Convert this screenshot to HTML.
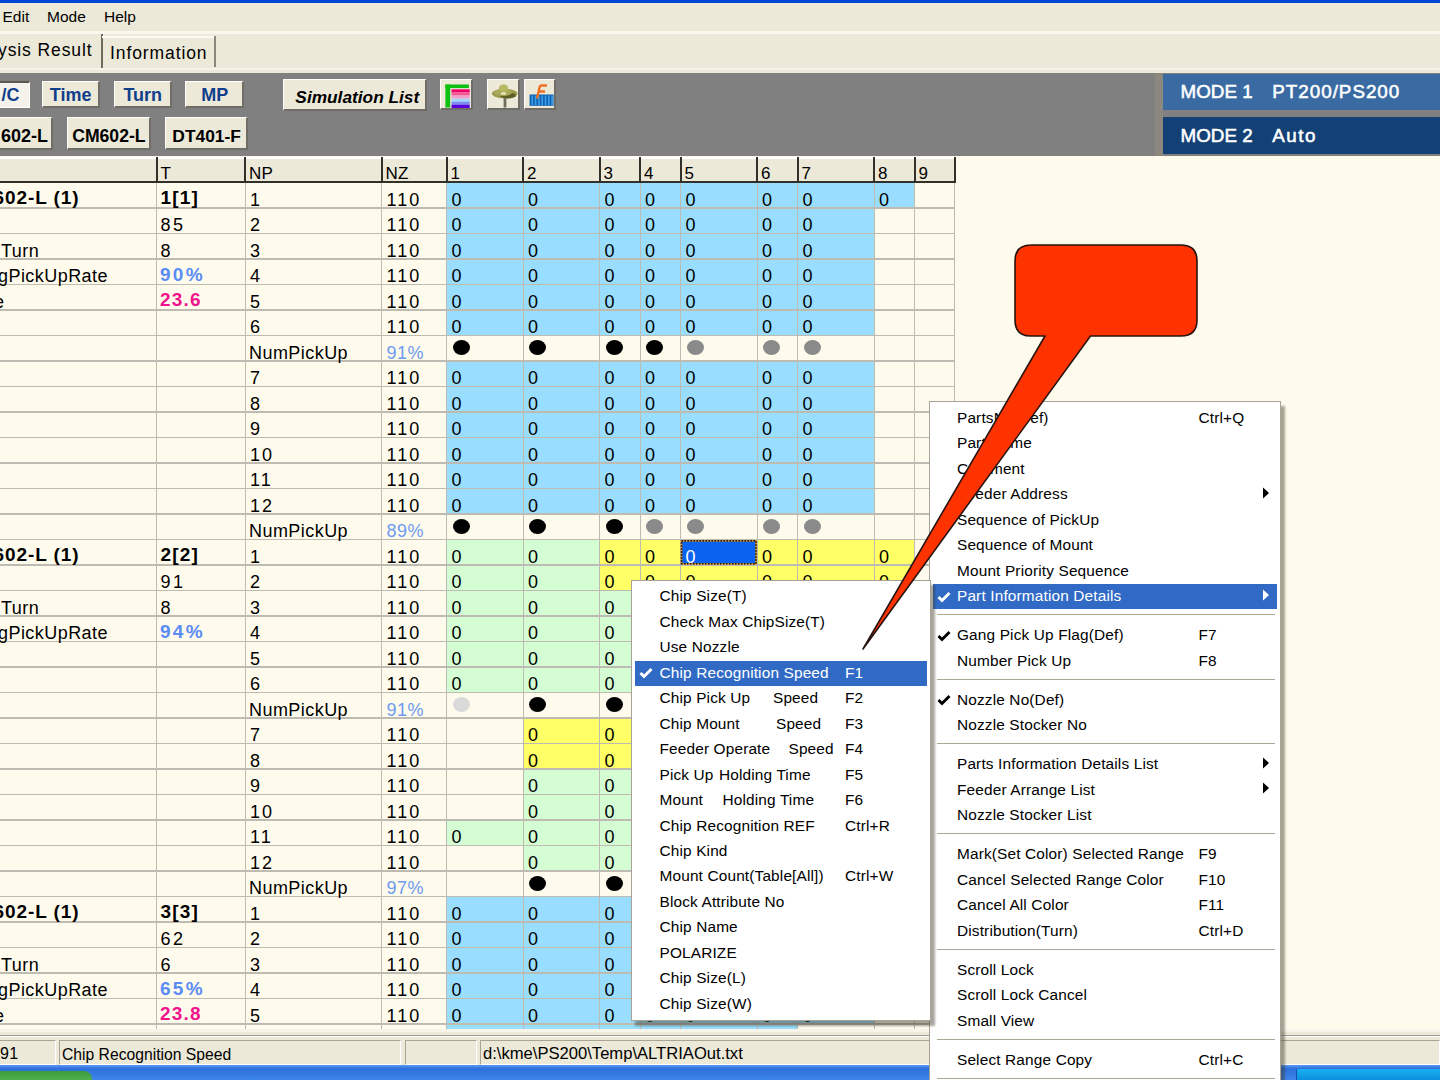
<!DOCTYPE html><html><head><meta charset="utf-8"><style>
html,body{margin:0;padding:0;width:1440px;height:1080px;overflow:hidden;background:#ECE9D8;}
body{position:relative;font-family:"Liberation Sans", sans-serif;}
div,span,svg{position:absolute;box-sizing:border-box;}
.t{white-space:pre;line-height:1;color:#000;}
</style></head><body>
<div style="left:0px;top:0px;width:1440px;height:3px;background:#0046D5"></div>
<span class="t" style="left:2.5px;top:8.87px;font-size:15.5px;letter-spacing:0px;">Edit</span>
<span class="t" style="left:47px;top:8.87px;font-size:15.5px;letter-spacing:0px;">Mode</span>
<span class="t" style="left:104px;top:8.87px;font-size:15.5px;letter-spacing:0px;">Help</span>
<div style="left:0px;top:31px;width:1440px;height:2.5px;background:#FAF8EE"></div>
<div style="left:101px;top:34px;width:2px;height:34px;background:#6E6B60"></div>
<div style="left:102px;top:36px;width:112px;height:1.5px;background:#FBFAF4"></div>
<div style="left:213.5px;top:36px;width:2px;height:31px;background:#8A877C"></div>
<span class="t" style="left:-2px;top:42.18px;font-size:17.5px;letter-spacing:0px;letter-spacing:0.9px">ysis Result</span>
<span class="t" style="left:110px;top:44.68px;font-size:17.5px;letter-spacing:0px;letter-spacing:0.9px">Information</span>
<div style="left:0px;top:68px;width:1440px;height:1.5px;background:#F6F4EA"></div>
<div style="left:0px;top:73px;width:1440px;height:82.5px;background:#808080"></div>
<div style="left:-40px;top:81px;width:69.5px;height:26.5px;background:#F4F2EA;border-top:2px solid #5A5850;border-left:2px solid #5A5850;border-right:1px solid #fff;border-bottom:1px solid #fff;"></div>
<div style="left:-40px;top:82.7px;width:69.5px;height:26.5px;display:flex;align-items:center;justify-content:center;font-weight:bold;font-size:18px;color:#103E8A;letter-spacing:0px;white-space:pre;justify-content:flex-end;padding-right:10px;">  /C</div>
<div style="left:41.7px;top:81px;width:58px;height:26.5px;background:#ECE9D8;border-top:1.5px solid #FFFFFF;border-left:1.5px solid #FFFFFF;border-right:2px solid #6F6D66;border-bottom:2px solid #6F6D66;"></div>
<div style="left:41.7px;top:82.7px;width:58px;height:26.5px;display:flex;align-items:center;justify-content:center;font-weight:bold;font-size:18px;color:#103E8A;letter-spacing:0px;white-space:pre;">Time</div>
<div style="left:113.7px;top:81px;width:58.2px;height:26.5px;background:#ECE9D8;border-top:1.5px solid #FFFFFF;border-left:1.5px solid #FFFFFF;border-right:2px solid #6F6D66;border-bottom:2px solid #6F6D66;"></div>
<div style="left:113.7px;top:82.7px;width:58.2px;height:26.5px;display:flex;align-items:center;justify-content:center;font-weight:bold;font-size:18px;color:#103E8A;letter-spacing:0px;white-space:pre;">Turn</div>
<div style="left:185.4px;top:81px;width:58.5px;height:26.5px;background:#ECE9D8;border-top:1.5px solid #FFFFFF;border-left:1.5px solid #FFFFFF;border-right:2px solid #6F6D66;border-bottom:2px solid #6F6D66;"></div>
<div style="left:185.4px;top:82.7px;width:58.5px;height:26.5px;display:flex;align-items:center;justify-content:center;font-weight:bold;font-size:18px;color:#103E8A;letter-spacing:0px;white-space:pre;">MP</div>
<div style="left:283.3px;top:79px;width:144px;height:31.5px;background:#ECE9D8;border-top:1.5px solid #FFFFFF;border-left:1.5px solid #FFFFFF;border-right:2px solid #6F6D66;border-bottom:2px solid #6F6D66;"></div>
<div style="left:283.3px;top:81.5px;width:144px;height:31.5px;display:flex;align-items:center;justify-content:center;font-weight:bold;font-size:17.3px;color:#000;letter-spacing:0px;white-space:pre;font-style:italic;padding-left:4px;">Simulation List</div>
<div style="left:439.6px;top:79px;width:33px;height:31px;background:#ECE9D8;border-top:1.5px solid #FFFFFF;border-left:1.5px solid #FFFFFF;border-right:2px solid #6F6D66;border-bottom:2px solid #6F6D66;"></div>
<div style="left:439.6px;top:79px;width:33px;height:31px;display:flex;align-items:center;justify-content:center;font-weight:bold;font-size:18px;color:#000;letter-spacing:0px;white-space:pre;"></div>
<div style="left:487.4px;top:79px;width:32.3px;height:31px;background:#ECE9D8;border-top:1.5px solid #FFFFFF;border-left:1.5px solid #FFFFFF;border-right:2px solid #6F6D66;border-bottom:2px solid #6F6D66;"></div>
<div style="left:487.4px;top:79px;width:32.3px;height:31px;display:flex;align-items:center;justify-content:center;font-weight:bold;font-size:18px;color:#000;letter-spacing:0px;white-space:pre;"></div>
<div style="left:523.6px;top:79px;width:32.7px;height:31px;background:#ECE9D8;border-top:1.5px solid #FFFFFF;border-left:1.5px solid #FFFFFF;border-right:2px solid #6F6D66;border-bottom:2px solid #6F6D66;"></div>
<div style="left:523.6px;top:79px;width:32.7px;height:31px;display:flex;align-items:center;justify-content:center;font-weight:bold;font-size:18px;color:#000;letter-spacing:0px;white-space:pre;"></div>
<svg style="left:440px;top:79px" width="33" height="31" viewBox="440 79 33 31"><rect x="445.4" y="84.5" width="4.8" height="23" fill="#10C010"/><rect x="445.4" y="84.5" width="23.5" height="3.6" fill="#10C010"/><rect x="451.5" y="89.3" width="18.2" height="3.2" fill="#F0006C"/><rect x="451.5" y="92.4" width="18.2" height="3.2" fill="#F05A96"/><rect x="451.5" y="95.5" width="18.2" height="3.2" fill="#F4A0CC"/><rect x="451.5" y="98.6" width="18.2" height="3.2" fill="#A8D4FA"/><rect x="451.5" y="101.7" width="18.2" height="3.2" fill="#7C8CF2"/><rect x="451.5" y="104.8" width="18.2" height="3.2" fill="#5A00DC"/></svg>
<svg style="left:487px;top:79px" width="33" height="31" viewBox="487 79 33 31"><rect x="503.6" y="96" width="2.8" height="11.5" fill="#6E6E60"/><ellipse cx="504.7" cy="93.6" rx="12.8" ry="4.8" fill="#9A9A4A"/><ellipse cx="508" cy="95.5" rx="8" ry="3" fill="#5E5E28"/><ellipse cx="503" cy="92.5" rx="9" ry="3.5" fill="#A8A858"/><ellipse cx="503.5" cy="88.2" rx="4.5" ry="3.6" fill="#B8B860"/><ellipse cx="503.5" cy="93.5" rx="3" ry="1.2" fill="#E8E8C0"/></svg>
<svg style="left:523px;top:79px" width="34" height="31" viewBox="523 79 34 31"><rect x="529.6" y="94.5" width="24" height="11.3" fill="#1060B0"/><rect x="531.5" y="95.5" width="1.6" height="9.5" fill="#3CA0E8"/><rect x="534.8" y="95.5" width="1.6" height="9.5" fill="#3CA0E8"/><rect x="538.1" y="95.5" width="1.6" height="9.5" fill="#3CA0E8"/><rect x="541.4" y="95.5" width="1.6" height="9.5" fill="#3CA0E8"/><rect x="544.7" y="95.5" width="1.6" height="9.5" fill="#3CA0E8"/><rect x="548" y="95.5" width="1.6" height="9.5" fill="#3CA0E8"/><rect x="551.3" y="95.5" width="1.6" height="9.5" fill="#3CA0E8"/><path d="M540 85.5 H547 M539.5 91.5 H545 M540 85.5 L537 98.5" stroke="#F07020" stroke-width="2.4" fill="none"/></svg>
<div style="left:-40px;top:117px;width:93px;height:33px;background:#ECE9D8;border-top:1.5px solid #FFFFFF;border-left:1.5px solid #FFFFFF;border-right:2px solid #6F6D66;border-bottom:2px solid #6F6D66;"></div>
<div style="left:-40px;top:119.7px;width:93px;height:33px;display:flex;align-items:center;justify-content:center;font-weight:bold;font-size:18px;color:#000;letter-spacing:0px;white-space:pre;justify-content:flex-end;padding-right:5px;">602-L</div>
<div style="left:66.8px;top:117px;width:84.2px;height:33px;background:#ECE9D8;border-top:1.5px solid #FFFFFF;border-left:1.5px solid #FFFFFF;border-right:2px solid #6F6D66;border-bottom:2px solid #6F6D66;"></div>
<div style="left:66.8px;top:119.7px;width:84.2px;height:33px;display:flex;align-items:center;justify-content:center;font-weight:bold;font-size:17.6px;color:#000;letter-spacing:0px;white-space:pre;">CM602-L</div>
<div style="left:165px;top:117px;width:83.3px;height:33px;background:#ECE9D8;border-top:1.5px solid #FFFFFF;border-left:1.5px solid #FFFFFF;border-right:2px solid #6F6D66;border-bottom:2px solid #6F6D66;"></div>
<div style="left:165px;top:119.7px;width:83.3px;height:33px;display:flex;align-items:center;justify-content:center;font-weight:bold;font-size:17.4px;color:#000;letter-spacing:0px;white-space:pre;">DT401-F</div>
<div style="left:1155px;top:73px;width:8px;height:82.5px;background:#8C887F"></div>
<div style="left:1163px;top:73.7px;width:277px;height:36.7px;background:#396BA2"></div>
<div style="left:1163px;top:117px;width:277px;height:37.2px;background:#134176"></div>
<span class="t" style="left:1180.6px;top:83.38px;font-size:18.8px;letter-spacing:0px;color:#fff;-webkit-text-stroke:0.55px #fff;">MODE 1</span>
<span class="t" style="left:1272.3px;top:83.38px;font-size:18.8px;letter-spacing:1.0px;color:#fff;-webkit-text-stroke:0.55px #fff;">PT200/PS200</span>
<span class="t" style="left:1180.6px;top:127.08px;font-size:18.8px;letter-spacing:0px;color:#fff;-webkit-text-stroke:0.55px #fff;">MODE 2</span>
<span class="t" style="left:1272.3px;top:127.08px;font-size:18.8px;letter-spacing:1.5px;color:#fff;-webkit-text-stroke:0.55px #fff;">Auto</span>
<div style="left:0px;top:155.5px;width:1440px;height:874.5px;background:#FFFBEC"></div>
<div style="left:0px;top:157px;width:954.5px;height:25.5px;background:#ECE9D8"></div>
<div style="left:0px;top:157px;width:954.5px;height:1.5px;background:#FFFFFF"></div>
<div style="left:0px;top:181px;width:955px;height:2px;background:#33302A"></div>
<div style="left:155.5px;top:157px;width:2px;height:25.5px;background:#33302A"></div>
<div style="left:244px;top:157px;width:2px;height:25.5px;background:#33302A"></div>
<div style="left:380.5px;top:157px;width:2px;height:25.5px;background:#33302A"></div>
<div style="left:445.5px;top:157px;width:2px;height:25.5px;background:#33302A"></div>
<div style="left:522px;top:157px;width:2px;height:25.5px;background:#33302A"></div>
<div style="left:598.5px;top:157px;width:2px;height:25.5px;background:#33302A"></div>
<div style="left:639px;top:157px;width:2px;height:25.5px;background:#33302A"></div>
<div style="left:679.5px;top:157px;width:2px;height:25.5px;background:#33302A"></div>
<div style="left:756px;top:157px;width:2px;height:25.5px;background:#33302A"></div>
<div style="left:796.5px;top:157px;width:2px;height:25.5px;background:#33302A"></div>
<div style="left:873px;top:157px;width:2px;height:25.5px;background:#33302A"></div>
<div style="left:913.5px;top:157px;width:2px;height:25.5px;background:#33302A"></div>
<div style="left:953.5px;top:157px;width:2px;height:25.5px;background:#33302A"></div>
<span class="t" style="left:160.5px;top:164.9px;font-size:17px;letter-spacing:0px;letter-spacing:0.3px">T</span>
<span class="t" style="left:249px;top:164.9px;font-size:17px;letter-spacing:0px;letter-spacing:0.3px">NP</span>
<span class="t" style="left:385.5px;top:164.9px;font-size:17px;letter-spacing:0px;letter-spacing:0.3px">NZ</span>
<span class="t" style="left:450.5px;top:164.9px;font-size:17px;letter-spacing:0px;letter-spacing:0.3px">1</span>
<span class="t" style="left:527px;top:164.9px;font-size:17px;letter-spacing:0px;letter-spacing:0.3px">2</span>
<span class="t" style="left:603.5px;top:164.9px;font-size:17px;letter-spacing:0px;letter-spacing:0.3px">3</span>
<span class="t" style="left:644px;top:164.9px;font-size:17px;letter-spacing:0px;letter-spacing:0.3px">4</span>
<span class="t" style="left:684.5px;top:164.9px;font-size:17px;letter-spacing:0px;letter-spacing:0.3px">5</span>
<span class="t" style="left:761px;top:164.9px;font-size:17px;letter-spacing:0px;letter-spacing:0.3px">6</span>
<span class="t" style="left:801.5px;top:164.9px;font-size:17px;letter-spacing:0px;letter-spacing:0.3px">7</span>
<span class="t" style="left:878px;top:164.9px;font-size:17px;letter-spacing:0px;letter-spacing:0.3px">8</span>
<span class="t" style="left:918.5px;top:164.9px;font-size:17px;letter-spacing:0px;letter-spacing:0.3px">9</span>
<div style="left:446.5px;top:1024.0px;width:76.5px;height:5.0px;background:#9ADEFF"></div>
<div style="left:523px;top:1024.0px;width:76.5px;height:5.0px;background:#9ADEFF"></div>
<div style="left:599.5px;top:1024.0px;width:40.5px;height:5.0px;background:#9ADEFF"></div>
<div style="left:640px;top:1024.0px;width:40.5px;height:5.0px;background:#9ADEFF"></div>
<div style="left:680.5px;top:1024.0px;width:76.5px;height:5.0px;background:#9ADEFF"></div>
<div style="left:757px;top:1024.0px;width:40.5px;height:5.0px;background:#9ADEFF"></div>
<div style="left:446.5px;top:182.5px;width:76.5px;height:25.5px;background:#9ADEFF"></div>
<div style="left:523px;top:182.5px;width:76.5px;height:25.5px;background:#9ADEFF"></div>
<div style="left:599.5px;top:182.5px;width:40.5px;height:25.5px;background:#9ADEFF"></div>
<div style="left:640px;top:182.5px;width:40.5px;height:25.5px;background:#9ADEFF"></div>
<div style="left:680.5px;top:182.5px;width:76.5px;height:25.5px;background:#9ADEFF"></div>
<div style="left:757px;top:182.5px;width:40.5px;height:25.5px;background:#9ADEFF"></div>
<div style="left:797.5px;top:182.5px;width:76.5px;height:25.5px;background:#9ADEFF"></div>
<div style="left:874px;top:182.5px;width:40.5px;height:25.5px;background:#9ADEFF"></div>
<div style="left:446.5px;top:208.0px;width:76.5px;height:25.5px;background:#9ADEFF"></div>
<div style="left:523px;top:208.0px;width:76.5px;height:25.5px;background:#9ADEFF"></div>
<div style="left:599.5px;top:208.0px;width:40.5px;height:25.5px;background:#9ADEFF"></div>
<div style="left:640px;top:208.0px;width:40.5px;height:25.5px;background:#9ADEFF"></div>
<div style="left:680.5px;top:208.0px;width:76.5px;height:25.5px;background:#9ADEFF"></div>
<div style="left:757px;top:208.0px;width:40.5px;height:25.5px;background:#9ADEFF"></div>
<div style="left:797.5px;top:208.0px;width:76.5px;height:25.5px;background:#9ADEFF"></div>
<div style="left:446.5px;top:233.5px;width:76.5px;height:25.5px;background:#9ADEFF"></div>
<div style="left:523px;top:233.5px;width:76.5px;height:25.5px;background:#9ADEFF"></div>
<div style="left:599.5px;top:233.5px;width:40.5px;height:25.5px;background:#9ADEFF"></div>
<div style="left:640px;top:233.5px;width:40.5px;height:25.5px;background:#9ADEFF"></div>
<div style="left:680.5px;top:233.5px;width:76.5px;height:25.5px;background:#9ADEFF"></div>
<div style="left:757px;top:233.5px;width:40.5px;height:25.5px;background:#9ADEFF"></div>
<div style="left:797.5px;top:233.5px;width:76.5px;height:25.5px;background:#9ADEFF"></div>
<div style="left:446.5px;top:259.0px;width:76.5px;height:25.5px;background:#9ADEFF"></div>
<div style="left:523px;top:259.0px;width:76.5px;height:25.5px;background:#9ADEFF"></div>
<div style="left:599.5px;top:259.0px;width:40.5px;height:25.5px;background:#9ADEFF"></div>
<div style="left:640px;top:259.0px;width:40.5px;height:25.5px;background:#9ADEFF"></div>
<div style="left:680.5px;top:259.0px;width:76.5px;height:25.5px;background:#9ADEFF"></div>
<div style="left:757px;top:259.0px;width:40.5px;height:25.5px;background:#9ADEFF"></div>
<div style="left:797.5px;top:259.0px;width:76.5px;height:25.5px;background:#9ADEFF"></div>
<div style="left:446.5px;top:284.5px;width:76.5px;height:25.5px;background:#9ADEFF"></div>
<div style="left:523px;top:284.5px;width:76.5px;height:25.5px;background:#9ADEFF"></div>
<div style="left:599.5px;top:284.5px;width:40.5px;height:25.5px;background:#9ADEFF"></div>
<div style="left:640px;top:284.5px;width:40.5px;height:25.5px;background:#9ADEFF"></div>
<div style="left:680.5px;top:284.5px;width:76.5px;height:25.5px;background:#9ADEFF"></div>
<div style="left:757px;top:284.5px;width:40.5px;height:25.5px;background:#9ADEFF"></div>
<div style="left:797.5px;top:284.5px;width:76.5px;height:25.5px;background:#9ADEFF"></div>
<div style="left:446.5px;top:310.0px;width:76.5px;height:25.5px;background:#9ADEFF"></div>
<div style="left:523px;top:310.0px;width:76.5px;height:25.5px;background:#9ADEFF"></div>
<div style="left:599.5px;top:310.0px;width:40.5px;height:25.5px;background:#9ADEFF"></div>
<div style="left:640px;top:310.0px;width:40.5px;height:25.5px;background:#9ADEFF"></div>
<div style="left:680.5px;top:310.0px;width:76.5px;height:25.5px;background:#9ADEFF"></div>
<div style="left:757px;top:310.0px;width:40.5px;height:25.5px;background:#9ADEFF"></div>
<div style="left:797.5px;top:310.0px;width:76.5px;height:25.5px;background:#9ADEFF"></div>
<div style="left:446.5px;top:361.0px;width:76.5px;height:25.5px;background:#9ADEFF"></div>
<div style="left:523px;top:361.0px;width:76.5px;height:25.5px;background:#9ADEFF"></div>
<div style="left:599.5px;top:361.0px;width:40.5px;height:25.5px;background:#9ADEFF"></div>
<div style="left:640px;top:361.0px;width:40.5px;height:25.5px;background:#9ADEFF"></div>
<div style="left:680.5px;top:361.0px;width:76.5px;height:25.5px;background:#9ADEFF"></div>
<div style="left:757px;top:361.0px;width:40.5px;height:25.5px;background:#9ADEFF"></div>
<div style="left:797.5px;top:361.0px;width:76.5px;height:25.5px;background:#9ADEFF"></div>
<div style="left:446.5px;top:386.5px;width:76.5px;height:25.5px;background:#9ADEFF"></div>
<div style="left:523px;top:386.5px;width:76.5px;height:25.5px;background:#9ADEFF"></div>
<div style="left:599.5px;top:386.5px;width:40.5px;height:25.5px;background:#9ADEFF"></div>
<div style="left:640px;top:386.5px;width:40.5px;height:25.5px;background:#9ADEFF"></div>
<div style="left:680.5px;top:386.5px;width:76.5px;height:25.5px;background:#9ADEFF"></div>
<div style="left:757px;top:386.5px;width:40.5px;height:25.5px;background:#9ADEFF"></div>
<div style="left:797.5px;top:386.5px;width:76.5px;height:25.5px;background:#9ADEFF"></div>
<div style="left:446.5px;top:412.0px;width:76.5px;height:25.5px;background:#9ADEFF"></div>
<div style="left:523px;top:412.0px;width:76.5px;height:25.5px;background:#9ADEFF"></div>
<div style="left:599.5px;top:412.0px;width:40.5px;height:25.5px;background:#9ADEFF"></div>
<div style="left:640px;top:412.0px;width:40.5px;height:25.5px;background:#9ADEFF"></div>
<div style="left:680.5px;top:412.0px;width:76.5px;height:25.5px;background:#9ADEFF"></div>
<div style="left:757px;top:412.0px;width:40.5px;height:25.5px;background:#9ADEFF"></div>
<div style="left:797.5px;top:412.0px;width:76.5px;height:25.5px;background:#9ADEFF"></div>
<div style="left:446.5px;top:437.5px;width:76.5px;height:25.5px;background:#9ADEFF"></div>
<div style="left:523px;top:437.5px;width:76.5px;height:25.5px;background:#9ADEFF"></div>
<div style="left:599.5px;top:437.5px;width:40.5px;height:25.5px;background:#9ADEFF"></div>
<div style="left:640px;top:437.5px;width:40.5px;height:25.5px;background:#9ADEFF"></div>
<div style="left:680.5px;top:437.5px;width:76.5px;height:25.5px;background:#9ADEFF"></div>
<div style="left:757px;top:437.5px;width:40.5px;height:25.5px;background:#9ADEFF"></div>
<div style="left:797.5px;top:437.5px;width:76.5px;height:25.5px;background:#9ADEFF"></div>
<div style="left:446.5px;top:463.0px;width:76.5px;height:25.5px;background:#9ADEFF"></div>
<div style="left:523px;top:463.0px;width:76.5px;height:25.5px;background:#9ADEFF"></div>
<div style="left:599.5px;top:463.0px;width:40.5px;height:25.5px;background:#9ADEFF"></div>
<div style="left:640px;top:463.0px;width:40.5px;height:25.5px;background:#9ADEFF"></div>
<div style="left:680.5px;top:463.0px;width:76.5px;height:25.5px;background:#9ADEFF"></div>
<div style="left:757px;top:463.0px;width:40.5px;height:25.5px;background:#9ADEFF"></div>
<div style="left:797.5px;top:463.0px;width:76.5px;height:25.5px;background:#9ADEFF"></div>
<div style="left:446.5px;top:488.5px;width:76.5px;height:25.5px;background:#9ADEFF"></div>
<div style="left:523px;top:488.5px;width:76.5px;height:25.5px;background:#9ADEFF"></div>
<div style="left:599.5px;top:488.5px;width:40.5px;height:25.5px;background:#9ADEFF"></div>
<div style="left:640px;top:488.5px;width:40.5px;height:25.5px;background:#9ADEFF"></div>
<div style="left:680.5px;top:488.5px;width:76.5px;height:25.5px;background:#9ADEFF"></div>
<div style="left:757px;top:488.5px;width:40.5px;height:25.5px;background:#9ADEFF"></div>
<div style="left:797.5px;top:488.5px;width:76.5px;height:25.5px;background:#9ADEFF"></div>
<div style="left:446.5px;top:539.5px;width:76.5px;height:25.5px;background:#D4FDD4"></div>
<div style="left:523px;top:539.5px;width:76.5px;height:25.5px;background:#D4FDD4"></div>
<div style="left:599.5px;top:539.5px;width:40.5px;height:25.5px;background:#FFFF66"></div>
<div style="left:640px;top:539.5px;width:40.5px;height:25.5px;background:#FFFF66"></div>
<div style="left:680.5px;top:539.5px;width:76.5px;height:25.5px;background:#FFFF66"></div>
<div style="left:757px;top:539.5px;width:40.5px;height:25.5px;background:#FFFF66"></div>
<div style="left:797.5px;top:539.5px;width:76.5px;height:25.5px;background:#FFFF66"></div>
<div style="left:874px;top:539.5px;width:40.5px;height:25.5px;background:#FFFF66"></div>
<div style="left:446.5px;top:565.0px;width:76.5px;height:25.5px;background:#D4FDD4"></div>
<div style="left:523px;top:565.0px;width:76.5px;height:25.5px;background:#D4FDD4"></div>
<div style="left:599.5px;top:565.0px;width:40.5px;height:25.5px;background:#FFFF66"></div>
<div style="left:640px;top:565.0px;width:40.5px;height:25.5px;background:#FFFF66"></div>
<div style="left:680.5px;top:565.0px;width:76.5px;height:25.5px;background:#FFFF66"></div>
<div style="left:757px;top:565.0px;width:40.5px;height:25.5px;background:#FFFF66"></div>
<div style="left:797.5px;top:565.0px;width:76.5px;height:25.5px;background:#FFFF66"></div>
<div style="left:874px;top:565.0px;width:40.5px;height:25.5px;background:#FFFF66"></div>
<div style="left:446.5px;top:590.5px;width:76.5px;height:25.5px;background:#D4FDD4"></div>
<div style="left:523px;top:590.5px;width:76.5px;height:25.5px;background:#D4FDD4"></div>
<div style="left:599.5px;top:590.5px;width:40.5px;height:25.5px;background:#D4FDD4"></div>
<div style="left:446.5px;top:616.0px;width:76.5px;height:25.5px;background:#D4FDD4"></div>
<div style="left:523px;top:616.0px;width:76.5px;height:25.5px;background:#D4FDD4"></div>
<div style="left:599.5px;top:616.0px;width:40.5px;height:25.5px;background:#D4FDD4"></div>
<div style="left:446.5px;top:641.5px;width:76.5px;height:25.5px;background:#D4FDD4"></div>
<div style="left:523px;top:641.5px;width:76.5px;height:25.5px;background:#D4FDD4"></div>
<div style="left:599.5px;top:641.5px;width:40.5px;height:25.5px;background:#D4FDD4"></div>
<div style="left:446.5px;top:667.0px;width:76.5px;height:25.5px;background:#D4FDD4"></div>
<div style="left:523px;top:667.0px;width:76.5px;height:25.5px;background:#D4FDD4"></div>
<div style="left:599.5px;top:667.0px;width:40.5px;height:25.5px;background:#D4FDD4"></div>
<div style="left:523px;top:718.0px;width:76.5px;height:25.5px;background:#FFFF66"></div>
<div style="left:599.5px;top:718.0px;width:40.5px;height:25.5px;background:#FFFF66"></div>
<div style="left:523px;top:743.5px;width:76.5px;height:25.5px;background:#FFFF66"></div>
<div style="left:599.5px;top:743.5px;width:40.5px;height:25.5px;background:#FFFF66"></div>
<div style="left:523px;top:769.0px;width:76.5px;height:25.5px;background:#D4FDD4"></div>
<div style="left:599.5px;top:769.0px;width:40.5px;height:25.5px;background:#D4FDD4"></div>
<div style="left:523px;top:794.5px;width:76.5px;height:25.5px;background:#D4FDD4"></div>
<div style="left:599.5px;top:794.5px;width:40.5px;height:25.5px;background:#D4FDD4"></div>
<div style="left:446.5px;top:820.0px;width:76.5px;height:25.5px;background:#D4FDD4"></div>
<div style="left:523px;top:820.0px;width:76.5px;height:25.5px;background:#D4FDD4"></div>
<div style="left:599.5px;top:820.0px;width:40.5px;height:25.5px;background:#D4FDD4"></div>
<div style="left:523px;top:845.5px;width:76.5px;height:25.5px;background:#D4FDD4"></div>
<div style="left:599.5px;top:845.5px;width:40.5px;height:25.5px;background:#D4FDD4"></div>
<div style="left:446.5px;top:896.5px;width:76.5px;height:25.5px;background:#9ADEFF"></div>
<div style="left:523px;top:896.5px;width:76.5px;height:25.5px;background:#9ADEFF"></div>
<div style="left:599.5px;top:896.5px;width:40.5px;height:25.5px;background:#9ADEFF"></div>
<div style="left:640px;top:896.5px;width:40.5px;height:25.5px;background:#9ADEFF"></div>
<div style="left:680.5px;top:896.5px;width:76.5px;height:25.5px;background:#9ADEFF"></div>
<div style="left:757px;top:896.5px;width:40.5px;height:25.5px;background:#9ADEFF"></div>
<div style="left:797.5px;top:896.5px;width:76.5px;height:25.5px;background:#9ADEFF"></div>
<div style="left:446.5px;top:922.0px;width:76.5px;height:25.5px;background:#9ADEFF"></div>
<div style="left:523px;top:922.0px;width:76.5px;height:25.5px;background:#9ADEFF"></div>
<div style="left:599.5px;top:922.0px;width:40.5px;height:25.5px;background:#9ADEFF"></div>
<div style="left:640px;top:922.0px;width:40.5px;height:25.5px;background:#9ADEFF"></div>
<div style="left:680.5px;top:922.0px;width:76.5px;height:25.5px;background:#9ADEFF"></div>
<div style="left:757px;top:922.0px;width:40.5px;height:25.5px;background:#9ADEFF"></div>
<div style="left:797.5px;top:922.0px;width:76.5px;height:25.5px;background:#9ADEFF"></div>
<div style="left:446.5px;top:947.5px;width:76.5px;height:25.5px;background:#9ADEFF"></div>
<div style="left:523px;top:947.5px;width:76.5px;height:25.5px;background:#9ADEFF"></div>
<div style="left:599.5px;top:947.5px;width:40.5px;height:25.5px;background:#9ADEFF"></div>
<div style="left:640px;top:947.5px;width:40.5px;height:25.5px;background:#9ADEFF"></div>
<div style="left:680.5px;top:947.5px;width:76.5px;height:25.5px;background:#9ADEFF"></div>
<div style="left:757px;top:947.5px;width:40.5px;height:25.5px;background:#9ADEFF"></div>
<div style="left:797.5px;top:947.5px;width:76.5px;height:25.5px;background:#9ADEFF"></div>
<div style="left:446.5px;top:973.0px;width:76.5px;height:25.5px;background:#9ADEFF"></div>
<div style="left:523px;top:973.0px;width:76.5px;height:25.5px;background:#9ADEFF"></div>
<div style="left:599.5px;top:973.0px;width:40.5px;height:25.5px;background:#9ADEFF"></div>
<div style="left:640px;top:973.0px;width:40.5px;height:25.5px;background:#9ADEFF"></div>
<div style="left:680.5px;top:973.0px;width:76.5px;height:25.5px;background:#9ADEFF"></div>
<div style="left:757px;top:973.0px;width:40.5px;height:25.5px;background:#9ADEFF"></div>
<div style="left:797.5px;top:973.0px;width:76.5px;height:25.5px;background:#9ADEFF"></div>
<div style="left:446.5px;top:998.5px;width:76.5px;height:25.5px;background:#9ADEFF"></div>
<div style="left:523px;top:998.5px;width:76.5px;height:25.5px;background:#9ADEFF"></div>
<div style="left:599.5px;top:998.5px;width:40.5px;height:25.5px;background:#9ADEFF"></div>
<div style="left:640px;top:998.5px;width:40.5px;height:25.5px;background:#9ADEFF"></div>
<div style="left:680.5px;top:998.5px;width:76.5px;height:25.5px;background:#9ADEFF"></div>
<div style="left:757px;top:998.5px;width:40.5px;height:25.5px;background:#9ADEFF"></div>
<div style="left:797.5px;top:998.5px;width:76.5px;height:25.5px;background:#9ADEFF"></div>
<div style="left:0px;top:207.2px;width:954.5px;height:1.4px;background:#BDBBB2"></div>
<div style="left:0px;top:232.7px;width:954.5px;height:1.4px;background:#BDBBB2"></div>
<div style="left:0px;top:258.2px;width:954.5px;height:1.4px;background:#BDBBB2"></div>
<div style="left:0px;top:283.7px;width:954.5px;height:1.4px;background:#BDBBB2"></div>
<div style="left:0px;top:309.2px;width:954.5px;height:1.4px;background:#BDBBB2"></div>
<div style="left:0px;top:334.7px;width:954.5px;height:1.4px;background:#BDBBB2"></div>
<div style="left:0px;top:360.2px;width:954.5px;height:1.4px;background:#BDBBB2"></div>
<div style="left:0px;top:385.7px;width:954.5px;height:1.4px;background:#BDBBB2"></div>
<div style="left:0px;top:411.2px;width:954.5px;height:1.4px;background:#BDBBB2"></div>
<div style="left:0px;top:436.7px;width:954.5px;height:1.4px;background:#BDBBB2"></div>
<div style="left:0px;top:462.2px;width:954.5px;height:1.4px;background:#BDBBB2"></div>
<div style="left:0px;top:487.7px;width:954.5px;height:1.4px;background:#BDBBB2"></div>
<div style="left:0px;top:513.2px;width:954.5px;height:1.4px;background:#BDBBB2"></div>
<div style="left:0px;top:538.7px;width:954.5px;height:1.4px;background:#BDBBB2"></div>
<div style="left:0px;top:564.2px;width:954.5px;height:1.4px;background:#BDBBB2"></div>
<div style="left:0px;top:589.7px;width:954.5px;height:1.4px;background:#BDBBB2"></div>
<div style="left:0px;top:615.2px;width:954.5px;height:1.4px;background:#BDBBB2"></div>
<div style="left:0px;top:640.7px;width:954.5px;height:1.4px;background:#BDBBB2"></div>
<div style="left:0px;top:666.2px;width:954.5px;height:1.4px;background:#BDBBB2"></div>
<div style="left:0px;top:691.7px;width:954.5px;height:1.4px;background:#BDBBB2"></div>
<div style="left:0px;top:717.2px;width:954.5px;height:1.4px;background:#BDBBB2"></div>
<div style="left:0px;top:742.7px;width:954.5px;height:1.4px;background:#BDBBB2"></div>
<div style="left:0px;top:768.2px;width:954.5px;height:1.4px;background:#BDBBB2"></div>
<div style="left:0px;top:793.7px;width:954.5px;height:1.4px;background:#BDBBB2"></div>
<div style="left:0px;top:819.2px;width:954.5px;height:1.4px;background:#BDBBB2"></div>
<div style="left:0px;top:844.7px;width:954.5px;height:1.4px;background:#BDBBB2"></div>
<div style="left:0px;top:870.2px;width:954.5px;height:1.4px;background:#BDBBB2"></div>
<div style="left:0px;top:895.7px;width:954.5px;height:1.4px;background:#BDBBB2"></div>
<div style="left:0px;top:921.2px;width:954.5px;height:1.4px;background:#BDBBB2"></div>
<div style="left:0px;top:946.7px;width:954.5px;height:1.4px;background:#BDBBB2"></div>
<div style="left:0px;top:972.2px;width:954.5px;height:1.4px;background:#BDBBB2"></div>
<div style="left:0px;top:997.7px;width:954.5px;height:1.4px;background:#BDBBB2"></div>
<div style="left:0px;top:1023.2px;width:954.5px;height:1.4px;background:#BDBBB2"></div>
<div style="left:156.1px;top:182.5px;width:1.4px;height:846.5px;background:#BDBBB2"></div>
<div style="left:244.6px;top:182.5px;width:1.4px;height:846.5px;background:#BDBBB2"></div>
<div style="left:381.1px;top:182.5px;width:1.4px;height:846.5px;background:#BDBBB2"></div>
<div style="left:446.1px;top:182.5px;width:1.4px;height:846.5px;background:#BDBBB2"></div>
<div style="left:522.6px;top:182.5px;width:1.4px;height:846.5px;background:#BDBBB2"></div>
<div style="left:599.1px;top:182.5px;width:1.4px;height:846.5px;background:#BDBBB2"></div>
<div style="left:639.6px;top:182.5px;width:1.4px;height:846.5px;background:#BDBBB2"></div>
<div style="left:680.1px;top:182.5px;width:1.4px;height:846.5px;background:#BDBBB2"></div>
<div style="left:756.6px;top:182.5px;width:1.4px;height:846.5px;background:#BDBBB2"></div>
<div style="left:797.1px;top:182.5px;width:1.4px;height:846.5px;background:#BDBBB2"></div>
<div style="left:873.6px;top:182.5px;width:1.4px;height:846.5px;background:#BDBBB2"></div>
<div style="left:914.1px;top:182.5px;width:1.4px;height:846.5px;background:#BDBBB2"></div>
<div style="left:954.1px;top:182.5px;width:1.4px;height:846.5px;background:#BDBBB2"></div>
<svg style="left:680px;top:539px" width="78" height="27" viewBox="680 539 78 27"><rect x="681.5" y="540.8" width="74.5" height="23" fill="#0A62F0" stroke="#D89020" stroke-width="1.6"/><rect x="681.5" y="540.8" width="74.5" height="23" fill="none" stroke="#101010" stroke-width="1.6" stroke-dasharray="1.5 1.5"/></svg>
<span class="t" style="left:-6.5px;top:187.91px;font-size:19px;letter-spacing:0.9px;font-weight:bold">602-L (1)</span>
<span class="t" style="left:160.5px;top:187.91px;font-size:19px;letter-spacing:1.2px;font-weight:bold">1[1]</span>
<span class="t" style="left:160.5px;top:216.45px;font-size:18px;letter-spacing:2.5px;">85</span>
<span class="t" style="left:160.5px;top:241.95px;font-size:18px;letter-spacing:2px;">8</span>
<span class="t" style="left:160px;top:264.91px;font-size:19px;letter-spacing:2.3px;font-weight:bold;color:#5A8CF5">90%</span>
<span class="t" style="left:160px;top:290.41px;font-size:19px;letter-spacing:1.2px;font-weight:bold;color:#F0148C">23.6</span>
<span class="t" style="left:1px;top:241.95px;font-size:18px;letter-spacing:0.45px;">Turn</span>
<span class="t" style="left:-2px;top:267.45px;font-size:18px;letter-spacing:0.45px;">gPickUpRate</span>
<span class="t" style="left:-6px;top:292.95px;font-size:18px;letter-spacing:0.45px;">e</span>
<span class="t" style="left:250px;top:190.95px;font-size:18px;letter-spacing:0.45px;">1</span>
<span class="t" style="left:386.5px;top:190.95px;font-size:18px;letter-spacing:2px;">110</span>
<span class="t" style="left:250px;top:216.45px;font-size:18px;letter-spacing:0.45px;">2</span>
<span class="t" style="left:386.5px;top:216.45px;font-size:18px;letter-spacing:2px;">110</span>
<span class="t" style="left:250px;top:241.95px;font-size:18px;letter-spacing:0.45px;">3</span>
<span class="t" style="left:386.5px;top:241.95px;font-size:18px;letter-spacing:2px;">110</span>
<span class="t" style="left:250px;top:267.45px;font-size:18px;letter-spacing:0.45px;">4</span>
<span class="t" style="left:386.5px;top:267.45px;font-size:18px;letter-spacing:2px;">110</span>
<span class="t" style="left:250px;top:292.95px;font-size:18px;letter-spacing:0.45px;">5</span>
<span class="t" style="left:386.5px;top:292.95px;font-size:18px;letter-spacing:2px;">110</span>
<span class="t" style="left:250px;top:318.45px;font-size:18px;letter-spacing:0.45px;">6</span>
<span class="t" style="left:386.5px;top:318.45px;font-size:18px;letter-spacing:2px;">110</span>
<span class="t" style="left:249px;top:343.95px;font-size:18px;letter-spacing:0.45px;">NumPickUp</span>
<span class="t" style="left:386.5px;top:343.95px;font-size:18px;letter-spacing:0.45px;color:#6E9AF0">91%</span>
<span class="t" style="left:250px;top:369.45px;font-size:18px;letter-spacing:2px;">7</span>
<span class="t" style="left:386.5px;top:369.45px;font-size:18px;letter-spacing:2px;">110</span>
<span class="t" style="left:250px;top:394.95px;font-size:18px;letter-spacing:2px;">8</span>
<span class="t" style="left:386.5px;top:394.95px;font-size:18px;letter-spacing:2px;">110</span>
<span class="t" style="left:250px;top:420.45px;font-size:18px;letter-spacing:2px;">9</span>
<span class="t" style="left:386.5px;top:420.45px;font-size:18px;letter-spacing:2px;">110</span>
<span class="t" style="left:250px;top:445.95px;font-size:18px;letter-spacing:2px;">10</span>
<span class="t" style="left:386.5px;top:445.95px;font-size:18px;letter-spacing:2px;">110</span>
<span class="t" style="left:250px;top:471.45px;font-size:18px;letter-spacing:2px;">11</span>
<span class="t" style="left:386.5px;top:471.45px;font-size:18px;letter-spacing:2px;">110</span>
<span class="t" style="left:250px;top:496.95px;font-size:18px;letter-spacing:2px;">12</span>
<span class="t" style="left:386.5px;top:496.95px;font-size:18px;letter-spacing:2px;">110</span>
<span class="t" style="left:249px;top:522.45px;font-size:18px;letter-spacing:0.45px;">NumPickUp</span>
<span class="t" style="left:386.5px;top:522.45px;font-size:18px;letter-spacing:0.45px;color:#6E9AF0">89%</span>
<span class="t" style="left:-6.5px;top:544.91px;font-size:19px;letter-spacing:0.9px;font-weight:bold">602-L (1)</span>
<span class="t" style="left:160.5px;top:544.91px;font-size:19px;letter-spacing:1.2px;font-weight:bold">2[2]</span>
<span class="t" style="left:160.5px;top:573.45px;font-size:18px;letter-spacing:2.5px;">91</span>
<span class="t" style="left:160.5px;top:598.95px;font-size:18px;letter-spacing:2px;">8</span>
<span class="t" style="left:160px;top:621.91px;font-size:19px;letter-spacing:2.3px;font-weight:bold;color:#5A8CF5">94%</span>
<span class="t" style="left:1px;top:598.95px;font-size:18px;letter-spacing:0.45px;">Turn</span>
<span class="t" style="left:-2px;top:624.45px;font-size:18px;letter-spacing:0.45px;">gPickUpRate</span>
<span class="t" style="left:250px;top:547.95px;font-size:18px;letter-spacing:0.45px;">1</span>
<span class="t" style="left:386.5px;top:547.95px;font-size:18px;letter-spacing:2px;">110</span>
<span class="t" style="left:250px;top:573.45px;font-size:18px;letter-spacing:0.45px;">2</span>
<span class="t" style="left:386.5px;top:573.45px;font-size:18px;letter-spacing:2px;">110</span>
<span class="t" style="left:250px;top:598.95px;font-size:18px;letter-spacing:0.45px;">3</span>
<span class="t" style="left:386.5px;top:598.95px;font-size:18px;letter-spacing:2px;">110</span>
<span class="t" style="left:250px;top:624.45px;font-size:18px;letter-spacing:0.45px;">4</span>
<span class="t" style="left:386.5px;top:624.45px;font-size:18px;letter-spacing:2px;">110</span>
<span class="t" style="left:250px;top:649.95px;font-size:18px;letter-spacing:0.45px;">5</span>
<span class="t" style="left:386.5px;top:649.95px;font-size:18px;letter-spacing:2px;">110</span>
<span class="t" style="left:250px;top:675.45px;font-size:18px;letter-spacing:0.45px;">6</span>
<span class="t" style="left:386.5px;top:675.45px;font-size:18px;letter-spacing:2px;">110</span>
<span class="t" style="left:249px;top:700.95px;font-size:18px;letter-spacing:0.45px;">NumPickUp</span>
<span class="t" style="left:386.5px;top:700.95px;font-size:18px;letter-spacing:0.45px;color:#6E9AF0">91%</span>
<span class="t" style="left:250px;top:726.45px;font-size:18px;letter-spacing:2px;">7</span>
<span class="t" style="left:386.5px;top:726.45px;font-size:18px;letter-spacing:2px;">110</span>
<span class="t" style="left:250px;top:751.95px;font-size:18px;letter-spacing:2px;">8</span>
<span class="t" style="left:386.5px;top:751.95px;font-size:18px;letter-spacing:2px;">110</span>
<span class="t" style="left:250px;top:777.45px;font-size:18px;letter-spacing:2px;">9</span>
<span class="t" style="left:386.5px;top:777.45px;font-size:18px;letter-spacing:2px;">110</span>
<span class="t" style="left:250px;top:802.95px;font-size:18px;letter-spacing:2px;">10</span>
<span class="t" style="left:386.5px;top:802.95px;font-size:18px;letter-spacing:2px;">110</span>
<span class="t" style="left:250px;top:828.45px;font-size:18px;letter-spacing:2px;">11</span>
<span class="t" style="left:386.5px;top:828.45px;font-size:18px;letter-spacing:2px;">110</span>
<span class="t" style="left:250px;top:853.95px;font-size:18px;letter-spacing:2px;">12</span>
<span class="t" style="left:386.5px;top:853.95px;font-size:18px;letter-spacing:2px;">110</span>
<span class="t" style="left:249px;top:879.45px;font-size:18px;letter-spacing:0.45px;">NumPickUp</span>
<span class="t" style="left:386.5px;top:879.45px;font-size:18px;letter-spacing:0.45px;color:#6E9AF0">97%</span>
<span class="t" style="left:-6.5px;top:901.91px;font-size:19px;letter-spacing:0.9px;font-weight:bold">602-L (1)</span>
<span class="t" style="left:160.5px;top:901.91px;font-size:19px;letter-spacing:1.2px;font-weight:bold">3[3]</span>
<span class="t" style="left:160.5px;top:930.45px;font-size:18px;letter-spacing:2.5px;">62</span>
<span class="t" style="left:160.5px;top:955.95px;font-size:18px;letter-spacing:2px;">6</span>
<span class="t" style="left:160px;top:978.91px;font-size:19px;letter-spacing:2.3px;font-weight:bold;color:#5A8CF5">65%</span>
<span class="t" style="left:160px;top:1004.41px;font-size:19px;letter-spacing:1.2px;font-weight:bold;color:#F0148C">23.8</span>
<span class="t" style="left:1px;top:955.95px;font-size:18px;letter-spacing:0.45px;">Turn</span>
<span class="t" style="left:-2px;top:981.45px;font-size:18px;letter-spacing:0.45px;">gPickUpRate</span>
<span class="t" style="left:-6px;top:1006.95px;font-size:18px;letter-spacing:0.45px;">e</span>
<span class="t" style="left:250px;top:904.95px;font-size:18px;letter-spacing:0.45px;">1</span>
<span class="t" style="left:386.5px;top:904.95px;font-size:18px;letter-spacing:2px;">110</span>
<span class="t" style="left:250px;top:930.45px;font-size:18px;letter-spacing:0.45px;">2</span>
<span class="t" style="left:386.5px;top:930.45px;font-size:18px;letter-spacing:2px;">110</span>
<span class="t" style="left:250px;top:955.95px;font-size:18px;letter-spacing:0.45px;">3</span>
<span class="t" style="left:386.5px;top:955.95px;font-size:18px;letter-spacing:2px;">110</span>
<span class="t" style="left:250px;top:981.45px;font-size:18px;letter-spacing:0.45px;">4</span>
<span class="t" style="left:386.5px;top:981.45px;font-size:18px;letter-spacing:2px;">110</span>
<span class="t" style="left:250px;top:1006.95px;font-size:18px;letter-spacing:0.45px;">5</span>
<span class="t" style="left:386.5px;top:1006.95px;font-size:18px;letter-spacing:2px;">110</span>
<span class="t" style="left:451.5px;top:190.95px;font-size:18px;letter-spacing:0.45px;">0</span>
<span class="t" style="left:528px;top:190.95px;font-size:18px;letter-spacing:0.45px;">0</span>
<span class="t" style="left:604.5px;top:190.95px;font-size:18px;letter-spacing:0.45px;">0</span>
<span class="t" style="left:645px;top:190.95px;font-size:18px;letter-spacing:0.45px;">0</span>
<span class="t" style="left:685.5px;top:190.95px;font-size:18px;letter-spacing:0.45px;">0</span>
<span class="t" style="left:762px;top:190.95px;font-size:18px;letter-spacing:0.45px;">0</span>
<span class="t" style="left:802.5px;top:190.95px;font-size:18px;letter-spacing:0.45px;">0</span>
<span class="t" style="left:879px;top:190.95px;font-size:18px;letter-spacing:0.45px;">0</span>
<span class="t" style="left:451.5px;top:216.45px;font-size:18px;letter-spacing:0.45px;">0</span>
<span class="t" style="left:528px;top:216.45px;font-size:18px;letter-spacing:0.45px;">0</span>
<span class="t" style="left:604.5px;top:216.45px;font-size:18px;letter-spacing:0.45px;">0</span>
<span class="t" style="left:645px;top:216.45px;font-size:18px;letter-spacing:0.45px;">0</span>
<span class="t" style="left:685.5px;top:216.45px;font-size:18px;letter-spacing:0.45px;">0</span>
<span class="t" style="left:762px;top:216.45px;font-size:18px;letter-spacing:0.45px;">0</span>
<span class="t" style="left:802.5px;top:216.45px;font-size:18px;letter-spacing:0.45px;">0</span>
<span class="t" style="left:451.5px;top:241.95px;font-size:18px;letter-spacing:0.45px;">0</span>
<span class="t" style="left:528px;top:241.95px;font-size:18px;letter-spacing:0.45px;">0</span>
<span class="t" style="left:604.5px;top:241.95px;font-size:18px;letter-spacing:0.45px;">0</span>
<span class="t" style="left:645px;top:241.95px;font-size:18px;letter-spacing:0.45px;">0</span>
<span class="t" style="left:685.5px;top:241.95px;font-size:18px;letter-spacing:0.45px;">0</span>
<span class="t" style="left:762px;top:241.95px;font-size:18px;letter-spacing:0.45px;">0</span>
<span class="t" style="left:802.5px;top:241.95px;font-size:18px;letter-spacing:0.45px;">0</span>
<span class="t" style="left:451.5px;top:267.45px;font-size:18px;letter-spacing:0.45px;">0</span>
<span class="t" style="left:528px;top:267.45px;font-size:18px;letter-spacing:0.45px;">0</span>
<span class="t" style="left:604.5px;top:267.45px;font-size:18px;letter-spacing:0.45px;">0</span>
<span class="t" style="left:645px;top:267.45px;font-size:18px;letter-spacing:0.45px;">0</span>
<span class="t" style="left:685.5px;top:267.45px;font-size:18px;letter-spacing:0.45px;">0</span>
<span class="t" style="left:762px;top:267.45px;font-size:18px;letter-spacing:0.45px;">0</span>
<span class="t" style="left:802.5px;top:267.45px;font-size:18px;letter-spacing:0.45px;">0</span>
<span class="t" style="left:451.5px;top:292.95px;font-size:18px;letter-spacing:0.45px;">0</span>
<span class="t" style="left:528px;top:292.95px;font-size:18px;letter-spacing:0.45px;">0</span>
<span class="t" style="left:604.5px;top:292.95px;font-size:18px;letter-spacing:0.45px;">0</span>
<span class="t" style="left:645px;top:292.95px;font-size:18px;letter-spacing:0.45px;">0</span>
<span class="t" style="left:685.5px;top:292.95px;font-size:18px;letter-spacing:0.45px;">0</span>
<span class="t" style="left:762px;top:292.95px;font-size:18px;letter-spacing:0.45px;">0</span>
<span class="t" style="left:802.5px;top:292.95px;font-size:18px;letter-spacing:0.45px;">0</span>
<span class="t" style="left:451.5px;top:318.45px;font-size:18px;letter-spacing:0.45px;">0</span>
<span class="t" style="left:528px;top:318.45px;font-size:18px;letter-spacing:0.45px;">0</span>
<span class="t" style="left:604.5px;top:318.45px;font-size:18px;letter-spacing:0.45px;">0</span>
<span class="t" style="left:645px;top:318.45px;font-size:18px;letter-spacing:0.45px;">0</span>
<span class="t" style="left:685.5px;top:318.45px;font-size:18px;letter-spacing:0.45px;">0</span>
<span class="t" style="left:762px;top:318.45px;font-size:18px;letter-spacing:0.45px;">0</span>
<span class="t" style="left:802.5px;top:318.45px;font-size:18px;letter-spacing:0.45px;">0</span>
<span class="t" style="left:451.5px;top:369.45px;font-size:18px;letter-spacing:0.45px;">0</span>
<span class="t" style="left:528px;top:369.45px;font-size:18px;letter-spacing:0.45px;">0</span>
<span class="t" style="left:604.5px;top:369.45px;font-size:18px;letter-spacing:0.45px;">0</span>
<span class="t" style="left:645px;top:369.45px;font-size:18px;letter-spacing:0.45px;">0</span>
<span class="t" style="left:685.5px;top:369.45px;font-size:18px;letter-spacing:0.45px;">0</span>
<span class="t" style="left:762px;top:369.45px;font-size:18px;letter-spacing:0.45px;">0</span>
<span class="t" style="left:802.5px;top:369.45px;font-size:18px;letter-spacing:0.45px;">0</span>
<span class="t" style="left:451.5px;top:394.95px;font-size:18px;letter-spacing:0.45px;">0</span>
<span class="t" style="left:528px;top:394.95px;font-size:18px;letter-spacing:0.45px;">0</span>
<span class="t" style="left:604.5px;top:394.95px;font-size:18px;letter-spacing:0.45px;">0</span>
<span class="t" style="left:645px;top:394.95px;font-size:18px;letter-spacing:0.45px;">0</span>
<span class="t" style="left:685.5px;top:394.95px;font-size:18px;letter-spacing:0.45px;">0</span>
<span class="t" style="left:762px;top:394.95px;font-size:18px;letter-spacing:0.45px;">0</span>
<span class="t" style="left:802.5px;top:394.95px;font-size:18px;letter-spacing:0.45px;">0</span>
<span class="t" style="left:451.5px;top:420.45px;font-size:18px;letter-spacing:0.45px;">0</span>
<span class="t" style="left:528px;top:420.45px;font-size:18px;letter-spacing:0.45px;">0</span>
<span class="t" style="left:604.5px;top:420.45px;font-size:18px;letter-spacing:0.45px;">0</span>
<span class="t" style="left:645px;top:420.45px;font-size:18px;letter-spacing:0.45px;">0</span>
<span class="t" style="left:685.5px;top:420.45px;font-size:18px;letter-spacing:0.45px;">0</span>
<span class="t" style="left:762px;top:420.45px;font-size:18px;letter-spacing:0.45px;">0</span>
<span class="t" style="left:802.5px;top:420.45px;font-size:18px;letter-spacing:0.45px;">0</span>
<span class="t" style="left:451.5px;top:445.95px;font-size:18px;letter-spacing:0.45px;">0</span>
<span class="t" style="left:528px;top:445.95px;font-size:18px;letter-spacing:0.45px;">0</span>
<span class="t" style="left:604.5px;top:445.95px;font-size:18px;letter-spacing:0.45px;">0</span>
<span class="t" style="left:645px;top:445.95px;font-size:18px;letter-spacing:0.45px;">0</span>
<span class="t" style="left:685.5px;top:445.95px;font-size:18px;letter-spacing:0.45px;">0</span>
<span class="t" style="left:762px;top:445.95px;font-size:18px;letter-spacing:0.45px;">0</span>
<span class="t" style="left:802.5px;top:445.95px;font-size:18px;letter-spacing:0.45px;">0</span>
<span class="t" style="left:451.5px;top:471.45px;font-size:18px;letter-spacing:0.45px;">0</span>
<span class="t" style="left:528px;top:471.45px;font-size:18px;letter-spacing:0.45px;">0</span>
<span class="t" style="left:604.5px;top:471.45px;font-size:18px;letter-spacing:0.45px;">0</span>
<span class="t" style="left:645px;top:471.45px;font-size:18px;letter-spacing:0.45px;">0</span>
<span class="t" style="left:685.5px;top:471.45px;font-size:18px;letter-spacing:0.45px;">0</span>
<span class="t" style="left:762px;top:471.45px;font-size:18px;letter-spacing:0.45px;">0</span>
<span class="t" style="left:802.5px;top:471.45px;font-size:18px;letter-spacing:0.45px;">0</span>
<span class="t" style="left:451.5px;top:496.95px;font-size:18px;letter-spacing:0.45px;">0</span>
<span class="t" style="left:528px;top:496.95px;font-size:18px;letter-spacing:0.45px;">0</span>
<span class="t" style="left:604.5px;top:496.95px;font-size:18px;letter-spacing:0.45px;">0</span>
<span class="t" style="left:645px;top:496.95px;font-size:18px;letter-spacing:0.45px;">0</span>
<span class="t" style="left:685.5px;top:496.95px;font-size:18px;letter-spacing:0.45px;">0</span>
<span class="t" style="left:762px;top:496.95px;font-size:18px;letter-spacing:0.45px;">0</span>
<span class="t" style="left:802.5px;top:496.95px;font-size:18px;letter-spacing:0.45px;">0</span>
<span class="t" style="left:451.5px;top:547.95px;font-size:18px;letter-spacing:0.45px;">0</span>
<span class="t" style="left:528px;top:547.95px;font-size:18px;letter-spacing:0.45px;">0</span>
<span class="t" style="left:604.5px;top:547.95px;font-size:18px;letter-spacing:0.45px;">0</span>
<span class="t" style="left:645px;top:547.95px;font-size:18px;letter-spacing:0.45px;">0</span>
<span class="t" style="left:685.5px;top:547.95px;font-size:18px;letter-spacing:0.45px;color:#fff">0</span>
<span class="t" style="left:762px;top:547.95px;font-size:18px;letter-spacing:0.45px;">0</span>
<span class="t" style="left:802.5px;top:547.95px;font-size:18px;letter-spacing:0.45px;">0</span>
<span class="t" style="left:879px;top:547.95px;font-size:18px;letter-spacing:0.45px;">0</span>
<span class="t" style="left:451.5px;top:573.45px;font-size:18px;letter-spacing:0.45px;">0</span>
<span class="t" style="left:528px;top:573.45px;font-size:18px;letter-spacing:0.45px;">0</span>
<span class="t" style="left:604.5px;top:573.45px;font-size:18px;letter-spacing:0.45px;">0</span>
<span class="t" style="left:645px;top:573.45px;font-size:18px;letter-spacing:0.45px;">0</span>
<span class="t" style="left:685.5px;top:573.45px;font-size:18px;letter-spacing:0.45px;">0</span>
<span class="t" style="left:762px;top:573.45px;font-size:18px;letter-spacing:0.45px;">0</span>
<span class="t" style="left:802.5px;top:573.45px;font-size:18px;letter-spacing:0.45px;">0</span>
<span class="t" style="left:879px;top:573.45px;font-size:18px;letter-spacing:0.45px;">0</span>
<span class="t" style="left:451.5px;top:598.95px;font-size:18px;letter-spacing:0.45px;">0</span>
<span class="t" style="left:528px;top:598.95px;font-size:18px;letter-spacing:0.45px;">0</span>
<span class="t" style="left:604.5px;top:598.95px;font-size:18px;letter-spacing:0.45px;">0</span>
<span class="t" style="left:451.5px;top:624.45px;font-size:18px;letter-spacing:0.45px;">0</span>
<span class="t" style="left:528px;top:624.45px;font-size:18px;letter-spacing:0.45px;">0</span>
<span class="t" style="left:604.5px;top:624.45px;font-size:18px;letter-spacing:0.45px;">0</span>
<span class="t" style="left:451.5px;top:649.95px;font-size:18px;letter-spacing:0.45px;">0</span>
<span class="t" style="left:528px;top:649.95px;font-size:18px;letter-spacing:0.45px;">0</span>
<span class="t" style="left:604.5px;top:649.95px;font-size:18px;letter-spacing:0.45px;">0</span>
<span class="t" style="left:451.5px;top:675.45px;font-size:18px;letter-spacing:0.45px;">0</span>
<span class="t" style="left:528px;top:675.45px;font-size:18px;letter-spacing:0.45px;">0</span>
<span class="t" style="left:604.5px;top:675.45px;font-size:18px;letter-spacing:0.45px;">0</span>
<span class="t" style="left:528px;top:726.45px;font-size:18px;letter-spacing:0.45px;">0</span>
<span class="t" style="left:604.5px;top:726.45px;font-size:18px;letter-spacing:0.45px;">0</span>
<span class="t" style="left:528px;top:751.95px;font-size:18px;letter-spacing:0.45px;">0</span>
<span class="t" style="left:604.5px;top:751.95px;font-size:18px;letter-spacing:0.45px;">0</span>
<span class="t" style="left:528px;top:777.45px;font-size:18px;letter-spacing:0.45px;">0</span>
<span class="t" style="left:604.5px;top:777.45px;font-size:18px;letter-spacing:0.45px;">0</span>
<span class="t" style="left:528px;top:802.95px;font-size:18px;letter-spacing:0.45px;">0</span>
<span class="t" style="left:604.5px;top:802.95px;font-size:18px;letter-spacing:0.45px;">0</span>
<span class="t" style="left:451.5px;top:828.45px;font-size:18px;letter-spacing:0.45px;">0</span>
<span class="t" style="left:528px;top:828.45px;font-size:18px;letter-spacing:0.45px;">0</span>
<span class="t" style="left:604.5px;top:828.45px;font-size:18px;letter-spacing:0.45px;">0</span>
<span class="t" style="left:528px;top:853.95px;font-size:18px;letter-spacing:0.45px;">0</span>
<span class="t" style="left:604.5px;top:853.95px;font-size:18px;letter-spacing:0.45px;">0</span>
<span class="t" style="left:451.5px;top:904.95px;font-size:18px;letter-spacing:0.45px;">0</span>
<span class="t" style="left:528px;top:904.95px;font-size:18px;letter-spacing:0.45px;">0</span>
<span class="t" style="left:604.5px;top:904.95px;font-size:18px;letter-spacing:0.45px;">0</span>
<span class="t" style="left:645px;top:904.95px;font-size:18px;letter-spacing:0.45px;">0</span>
<span class="t" style="left:685.5px;top:904.95px;font-size:18px;letter-spacing:0.45px;">0</span>
<span class="t" style="left:762px;top:904.95px;font-size:18px;letter-spacing:0.45px;">0</span>
<span class="t" style="left:802.5px;top:904.95px;font-size:18px;letter-spacing:0.45px;">0</span>
<span class="t" style="left:451.5px;top:930.45px;font-size:18px;letter-spacing:0.45px;">0</span>
<span class="t" style="left:528px;top:930.45px;font-size:18px;letter-spacing:0.45px;">0</span>
<span class="t" style="left:604.5px;top:930.45px;font-size:18px;letter-spacing:0.45px;">0</span>
<span class="t" style="left:645px;top:930.45px;font-size:18px;letter-spacing:0.45px;">0</span>
<span class="t" style="left:685.5px;top:930.45px;font-size:18px;letter-spacing:0.45px;">0</span>
<span class="t" style="left:762px;top:930.45px;font-size:18px;letter-spacing:0.45px;">0</span>
<span class="t" style="left:802.5px;top:930.45px;font-size:18px;letter-spacing:0.45px;">0</span>
<span class="t" style="left:451.5px;top:955.95px;font-size:18px;letter-spacing:0.45px;">0</span>
<span class="t" style="left:528px;top:955.95px;font-size:18px;letter-spacing:0.45px;">0</span>
<span class="t" style="left:604.5px;top:955.95px;font-size:18px;letter-spacing:0.45px;">0</span>
<span class="t" style="left:645px;top:955.95px;font-size:18px;letter-spacing:0.45px;">0</span>
<span class="t" style="left:685.5px;top:955.95px;font-size:18px;letter-spacing:0.45px;">0</span>
<span class="t" style="left:762px;top:955.95px;font-size:18px;letter-spacing:0.45px;">0</span>
<span class="t" style="left:802.5px;top:955.95px;font-size:18px;letter-spacing:0.45px;">0</span>
<span class="t" style="left:451.5px;top:981.45px;font-size:18px;letter-spacing:0.45px;">0</span>
<span class="t" style="left:528px;top:981.45px;font-size:18px;letter-spacing:0.45px;">0</span>
<span class="t" style="left:604.5px;top:981.45px;font-size:18px;letter-spacing:0.45px;">0</span>
<span class="t" style="left:645px;top:981.45px;font-size:18px;letter-spacing:0.45px;">0</span>
<span class="t" style="left:685.5px;top:981.45px;font-size:18px;letter-spacing:0.45px;">0</span>
<span class="t" style="left:762px;top:981.45px;font-size:18px;letter-spacing:0.45px;">0</span>
<span class="t" style="left:802.5px;top:981.45px;font-size:18px;letter-spacing:0.45px;">0</span>
<span class="t" style="left:451.5px;top:1006.95px;font-size:18px;letter-spacing:0.45px;">0</span>
<span class="t" style="left:528px;top:1006.95px;font-size:18px;letter-spacing:0.45px;">0</span>
<span class="t" style="left:604.5px;top:1006.95px;font-size:18px;letter-spacing:0.45px;">0</span>
<span class="t" style="left:645px;top:1006.95px;font-size:18px;letter-spacing:0.45px;">0</span>
<span class="t" style="left:685.5px;top:1006.95px;font-size:18px;letter-spacing:0.45px;">0</span>
<span class="t" style="left:762px;top:1006.95px;font-size:18px;letter-spacing:0.45px;">0</span>
<span class="t" style="left:802.5px;top:1006.95px;font-size:18px;letter-spacing:0.45px;">0</span>
<div style="left:452.5px;top:340.0px;width:17px;height:15px;border-radius:50%;background:#000"></div>
<div style="left:529px;top:340.0px;width:17px;height:15px;border-radius:50%;background:#000"></div>
<div style="left:605.5px;top:340.0px;width:17px;height:15px;border-radius:50%;background:#000"></div>
<div style="left:646px;top:340.0px;width:17px;height:15px;border-radius:50%;background:#000"></div>
<div style="left:686.5px;top:340.0px;width:17px;height:15px;border-radius:50%;background:#8A8A8A"></div>
<div style="left:763px;top:340.0px;width:17px;height:15px;border-radius:50%;background:#8A8A8A"></div>
<div style="left:803.5px;top:340.0px;width:17px;height:15px;border-radius:50%;background:#8A8A8A"></div>
<div style="left:452.5px;top:518.5px;width:17px;height:15px;border-radius:50%;background:#000"></div>
<div style="left:529px;top:518.5px;width:17px;height:15px;border-radius:50%;background:#000"></div>
<div style="left:605.5px;top:518.5px;width:17px;height:15px;border-radius:50%;background:#000"></div>
<div style="left:646px;top:518.5px;width:17px;height:15px;border-radius:50%;background:#8A8A8A"></div>
<div style="left:686.5px;top:518.5px;width:17px;height:15px;border-radius:50%;background:#8A8A8A"></div>
<div style="left:763px;top:518.5px;width:17px;height:15px;border-radius:50%;background:#8A8A8A"></div>
<div style="left:803.5px;top:518.5px;width:17px;height:15px;border-radius:50%;background:#8A8A8A"></div>
<div style="left:452.5px;top:697.0px;width:17px;height:15px;border-radius:50%;background:#DADADA"></div>
<div style="left:529px;top:697.0px;width:17px;height:15px;border-radius:50%;background:#000"></div>
<div style="left:605.5px;top:697.0px;width:17px;height:15px;border-radius:50%;background:#000"></div>
<div style="left:529px;top:875.5px;width:17px;height:15px;border-radius:50%;background:#000"></div>
<div style="left:605.5px;top:875.5px;width:17px;height:15px;border-radius:50%;background:#000"></div>
<div style="left:0px;top:1029px;width:1440px;height:36px;background:#ECE9D8"></div>
<div style="left:0px;top:1029px;width:1440px;height:3px;background:#F7F5EA"></div>
<div style="left:0px;top:1034.5px;width:1440px;height:1.5px;background:#A19D90"></div>
<div style="left:0px;top:1036px;width:1440px;height:1px;background:#FFFFFF"></div>
<div style="left:-10px;top:1039.5px;width:66px;height:25px;border-top:1.5px solid #A8A595;border-left:1.5px solid #A8A595;border-right:1px solid #FFFFFF;border-bottom:1px solid #FFFFFF"></div>
<div style="left:59px;top:1039.5px;width:342px;height:25px;border-top:1.5px solid #A8A595;border-left:1.5px solid #A8A595;border-right:1px solid #FFFFFF;border-bottom:1px solid #FFFFFF"></div>
<div style="left:405px;top:1039.5px;width:72px;height:25px;border-top:1.5px solid #A8A595;border-left:1.5px solid #A8A595;border-right:1px solid #FFFFFF;border-bottom:1px solid #FFFFFF"></div>
<div style="left:480px;top:1039.5px;width:960px;height:25px;border-top:1.5px solid #A8A595;border-left:1.5px solid #A8A595;border-right:1px solid #FFFFFF;border-bottom:1px solid #FFFFFF"></div>
<span class="t" style="left:0px;top:1046.45px;font-size:16px;letter-spacing:0.3px;">91</span>
<span class="t" style="left:62px;top:1046.7px;font-size:15.7px;letter-spacing:0px;">Chip Recognition Speed</span>
<span class="t" style="left:483px;top:1045.94px;font-size:16.6px;letter-spacing:0px;">d:\kme\PS200\Temp\ALTRIAOut.txt</span>
<div style="left:0;top:1065px;width:1440px;height:15px;background:linear-gradient(#5A9AF0,#2F6FDD 25%,#3479E2 60%,#3D87EA)"></div>
<div style="left:0;top:1071px;width:92px;height:9px;border-radius:0 8px 0 0;background:linear-gradient(#3C9A3C,#4BB04B)"></div>
<div style="left:1296px;top:1069px;width:144px;height:11px;background:linear-gradient(#18B0F0,#0C8FE0);border-left:1px solid #1050B0"></div>
<div style="left:932.5px;top:406px;width:352.5px;height:700px;background:rgba(60,55,40,0.45);filter:blur(1.2px)"></div>
<div style="left:928.5px;top:401px;width:352.5px;height:700px;background:#FFFFFF;border:1.5px solid #A7A497"></div>
<span class="t" style="left:957px;top:409.76px;font-size:15.4px;letter-spacing:0.15px;color:#000">PartsNo(Def)</span>
<span class="t" style="left:1198.5px;top:409.76px;font-size:15.4px;letter-spacing:0.15px;color:#000">Ctrl+Q</span>
<span class="t" style="left:957px;top:435.26px;font-size:15.4px;letter-spacing:0.15px;color:#000">Part Name</span>
<span class="t" style="left:957px;top:460.76px;font-size:15.4px;letter-spacing:0.15px;color:#000">Comment</span>
<span class="t" style="left:957px;top:486.26px;font-size:15.4px;letter-spacing:0.15px;color:#000">Feeder Address</span>
<svg style="left:1262px;top:486.8px" width="8" height="12" viewBox="0 0 8 12"><path d="M1 0.5 L7 6 L1 11.5 Z" fill="#000"/></svg>
<span class="t" style="left:957px;top:511.76px;font-size:15.4px;letter-spacing:0.15px;color:#000">Sequence of PickUp</span>
<span class="t" style="left:957px;top:537.26px;font-size:15.4px;letter-spacing:0.15px;color:#000">Sequence of Mount</span>
<span class="t" style="left:957px;top:562.76px;font-size:15.4px;letter-spacing:0.15px;color:#000">Mount Priority Sequence</span>
<div style="left:932.6px;top:584.0px;width:344.19999999999993px;height:24.9px;background:#316AC5"></div>
<span class="t" style="left:957px;top:588.26px;font-size:15.4px;letter-spacing:0.15px;color:#fff">Part Information Details</span>
<svg style="left:937px;top:590.8px" width="14" height="12" viewBox="0 0 14 12"><path d="M1.5 6 L5 9.5 L12.5 2" fill="none" stroke="#fff" stroke-width="3"/></svg>
<svg style="left:1262px;top:588.8px" width="8" height="12" viewBox="0 0 8 12"><path d="M1 0.5 L7 6 L1 11.5 Z" fill="#fff"/></svg>
<div style="left:936.5px;top:614.3px;width:338.5px;height:1.2px;background:#ACA899"></div>
<span class="t" style="left:957px;top:627.26px;font-size:15.4px;letter-spacing:0.15px;color:#000">Gang Pick Up Flag(Def)</span>
<span class="t" style="left:1198.5px;top:627.26px;font-size:15.4px;letter-spacing:0.15px;color:#000">F7</span>
<svg style="left:937px;top:629.8px" width="14" height="12" viewBox="0 0 14 12"><path d="M1.5 6 L5 9.5 L12.5 2" fill="none" stroke="#000" stroke-width="3"/></svg>
<span class="t" style="left:957px;top:652.76px;font-size:15.4px;letter-spacing:0.15px;color:#000">Number Pick Up</span>
<span class="t" style="left:1198.5px;top:652.76px;font-size:15.4px;letter-spacing:0.15px;color:#000">F8</span>
<div style="left:936.5px;top:678.8px;width:338.5px;height:1.2px;background:#ACA899"></div>
<span class="t" style="left:957px;top:691.76px;font-size:15.4px;letter-spacing:0.15px;color:#000">Nozzle No(Def)</span>
<svg style="left:937px;top:694.3px" width="14" height="12" viewBox="0 0 14 12"><path d="M1.5 6 L5 9.5 L12.5 2" fill="none" stroke="#000" stroke-width="3"/></svg>
<span class="t" style="left:957px;top:717.26px;font-size:15.4px;letter-spacing:0.15px;color:#000">Nozzle Stocker No</span>
<div style="left:936.5px;top:743.3px;width:338.5px;height:1.2px;background:#ACA899"></div>
<span class="t" style="left:957px;top:756.26px;font-size:15.4px;letter-spacing:0.15px;color:#000">Parts Information Details List</span>
<svg style="left:1262px;top:756.8px" width="8" height="12" viewBox="0 0 8 12"><path d="M1 0.5 L7 6 L1 11.5 Z" fill="#000"/></svg>
<span class="t" style="left:957px;top:781.76px;font-size:15.4px;letter-spacing:0.15px;color:#000">Feeder Arrange List</span>
<svg style="left:1262px;top:782.3px" width="8" height="12" viewBox="0 0 8 12"><path d="M1 0.5 L7 6 L1 11.5 Z" fill="#000"/></svg>
<span class="t" style="left:957px;top:807.26px;font-size:15.4px;letter-spacing:0.15px;color:#000">Nozzle Stocker List</span>
<div style="left:936.5px;top:833.3px;width:338.5px;height:1.2px;background:#ACA899"></div>
<span class="t" style="left:957px;top:846.26px;font-size:15.4px;letter-spacing:0.15px;color:#000">Mark(Set Color) Selected Range</span>
<span class="t" style="left:1198.5px;top:846.26px;font-size:15.4px;letter-spacing:0.15px;color:#000">F9</span>
<span class="t" style="left:957px;top:871.76px;font-size:15.4px;letter-spacing:0.15px;color:#000">Cancel Selected Range Color</span>
<span class="t" style="left:1198.5px;top:871.76px;font-size:15.4px;letter-spacing:0.15px;color:#000">F10</span>
<span class="t" style="left:957px;top:897.26px;font-size:15.4px;letter-spacing:0.15px;color:#000">Cancel All Color</span>
<span class="t" style="left:1198.5px;top:897.26px;font-size:15.4px;letter-spacing:0.15px;color:#000">F11</span>
<span class="t" style="left:957px;top:922.76px;font-size:15.4px;letter-spacing:0.15px;color:#000">Distribution(Turn)</span>
<span class="t" style="left:1198.5px;top:922.76px;font-size:15.4px;letter-spacing:0.15px;color:#000">Ctrl+D</span>
<div style="left:936.5px;top:948.8px;width:338.5px;height:1.2px;background:#ACA899"></div>
<span class="t" style="left:957px;top:961.76px;font-size:15.4px;letter-spacing:0.15px;color:#000">Scroll Lock</span>
<span class="t" style="left:957px;top:987.26px;font-size:15.4px;letter-spacing:0.15px;color:#000">Scroll Lock Cancel</span>
<span class="t" style="left:957px;top:1012.76px;font-size:15.4px;letter-spacing:0.15px;color:#000">Small View</span>
<div style="left:936.5px;top:1038.8px;width:338.5px;height:1.2px;background:#ACA899"></div>
<span class="t" style="left:957px;top:1051.76px;font-size:15.4px;letter-spacing:0.15px;color:#000">Select Range Copy</span>
<span class="t" style="left:1198.5px;top:1051.76px;font-size:15.4px;letter-spacing:0.15px;color:#000">Ctrl+C</span>
<div style="left:936.5px;top:1077.8px;width:338.5px;height:1.2px;background:#ACA899"></div>
<div style="left:635px;top:584.5px;width:300px;height:441.0px;background:rgba(60,55,40,0.45);filter:blur(1.2px)"></div>
<div style="left:631px;top:579.5px;width:300px;height:441.0px;background:#FFFFFF;border:1.5px solid #A7A497"></div>
<span class="t" style="left:659.5px;top:588.46px;font-size:15.4px;letter-spacing:0.15px;color:#000">Chip Size(T)</span>
<span class="t" style="left:659.5px;top:613.91px;font-size:15.4px;letter-spacing:0.15px;color:#000">Check Max ChipSize(T)</span>
<span class="t" style="left:659.5px;top:639.36px;font-size:15.4px;letter-spacing:0.15px;color:#000">Use Nozzle</span>
<div style="left:634.6px;top:661.3500000000001px;width:292.4px;height:24.95px;background:#316AC5"></div>
<svg style="left:639px;top:667.3500000000001px" width="14" height="12" viewBox="0 0 14 12"><path d="M1.5 6 L5 9.5 L12.5 2" fill="none" stroke="#fff" stroke-width="3"/></svg>
<span class="t" style="left:659.5px;top:664.81px;font-size:15.4px;letter-spacing:0.15px;color:#fff">Chip Recognition Speed</span>
<span class="t" style="left:845px;top:664.81px;font-size:15.4px;letter-spacing:0.15px;color:#fff">F1</span>
<span class="t" style="left:659.5px;top:690.26px;font-size:15.4px;letter-spacing:0.15px;color:#000">Chip Pick Up</span>
<span class="t" style="left:773px;top:690.26px;font-size:15.4px;letter-spacing:0.15px;color:#000">Speed</span>
<span class="t" style="left:845px;top:690.26px;font-size:15.4px;letter-spacing:0.15px;color:#000">F2</span>
<span class="t" style="left:659.5px;top:715.71px;font-size:15.4px;letter-spacing:0.15px;color:#000">Chip Mount</span>
<span class="t" style="left:776px;top:715.71px;font-size:15.4px;letter-spacing:0.15px;color:#000">Speed</span>
<span class="t" style="left:845px;top:715.71px;font-size:15.4px;letter-spacing:0.15px;color:#000">F3</span>
<span class="t" style="left:659.5px;top:741.16px;font-size:15.4px;letter-spacing:0.15px;color:#000">Feeder Operate</span>
<span class="t" style="left:788.5px;top:741.16px;font-size:15.4px;letter-spacing:0.15px;color:#000">Speed</span>
<span class="t" style="left:845px;top:741.16px;font-size:15.4px;letter-spacing:0.15px;color:#000">F4</span>
<span class="t" style="left:659.5px;top:766.61px;font-size:15.4px;letter-spacing:0.15px;color:#000">Pick Up</span>
<span class="t" style="left:719px;top:766.61px;font-size:15.4px;letter-spacing:0.15px;color:#000">Holding Time</span>
<span class="t" style="left:845px;top:766.61px;font-size:15.4px;letter-spacing:0.15px;color:#000">F5</span>
<span class="t" style="left:659.5px;top:792.06px;font-size:15.4px;letter-spacing:0.15px;color:#000">Mount</span>
<span class="t" style="left:722.5px;top:792.06px;font-size:15.4px;letter-spacing:0.15px;color:#000">Holding Time</span>
<span class="t" style="left:845px;top:792.06px;font-size:15.4px;letter-spacing:0.15px;color:#000">F6</span>
<span class="t" style="left:659.5px;top:817.51px;font-size:15.4px;letter-spacing:0.15px;color:#000">Chip Recognition REF</span>
<span class="t" style="left:845px;top:817.51px;font-size:15.4px;letter-spacing:0.15px;color:#000">Ctrl+R</span>
<span class="t" style="left:659.5px;top:842.96px;font-size:15.4px;letter-spacing:0.15px;color:#000">Chip Kind</span>
<span class="t" style="left:659.5px;top:868.41px;font-size:15.4px;letter-spacing:0.15px;color:#000">Mount Count(Table[All])</span>
<span class="t" style="left:845px;top:868.41px;font-size:15.4px;letter-spacing:0.15px;color:#000">Ctrl+W</span>
<span class="t" style="left:659.5px;top:893.86px;font-size:15.4px;letter-spacing:0.15px;color:#000">Block Attribute No</span>
<span class="t" style="left:659.5px;top:919.31px;font-size:15.4px;letter-spacing:0.15px;color:#000">Chip Name</span>
<span class="t" style="left:659.5px;top:944.76px;font-size:15.4px;letter-spacing:0.15px;color:#000">POLARIZE</span>
<span class="t" style="left:659.5px;top:970.21px;font-size:15.4px;letter-spacing:0.15px;color:#000">Chip Size(L)</span>
<span class="t" style="left:659.5px;top:995.66px;font-size:15.4px;letter-spacing:0.15px;color:#000">Chip Size(W)</span>
<svg style="left:0;top:0" width="1440" height="1080" viewBox="0 0 1440 1080"><path d="M1031 245 H1181 Q1197 245 1197 261 V320 Q1197 336 1181 336 H1090.5 L863 649 L1045 336 H1031 Q1015 336 1015 320 V261 Q1015 245 1031 245 Z" fill="#FF3300" stroke="#2A1410" stroke-width="1.6" stroke-linejoin="round"/></svg>
</body></html>
